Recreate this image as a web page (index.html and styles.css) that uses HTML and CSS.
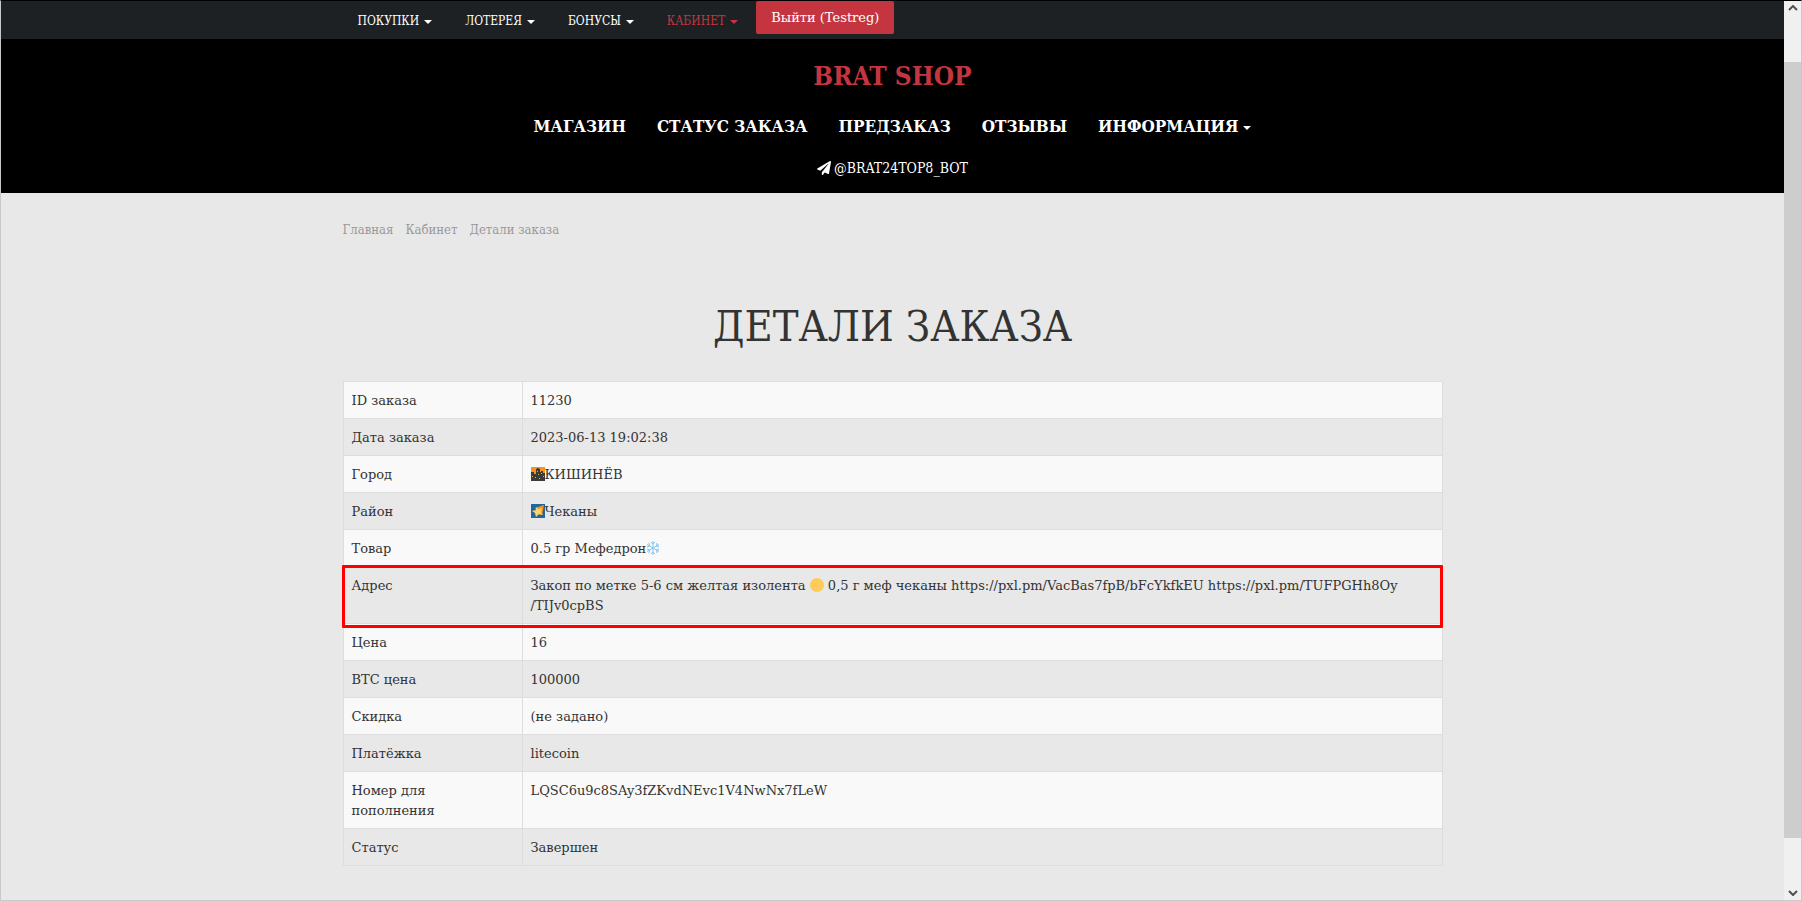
FILE: index.html
```html
<!DOCTYPE html>
<html lang="ru">
<head>
<meta charset="utf-8">
<title>Детали заказа</title>
<link rel="stylesheet" href="styles.css">
</head>
<body>
<div class="page">
  <nav class="topbar">
    <div class="container topbar-row">
      <a class="top-link" href="#">ПОКУПКИ<span class="caret"></span></a>
      <a class="top-link" href="#">ЛОТЕРЕЯ<span class="caret"></span></a>
      <a class="top-link" href="#">БОНУСЫ<span class="caret"></span></a>
      <a class="top-link active" href="#">КАБИНЕТ<span class="caret"></span></a>
      <button class="logout" type="button">Выйти (Testreg)</button>
    </div>
  </nav>
  <header class="header">
    <a class="brand" href="#">BRAT SHOP</a>
    <nav class="main-nav">
      <a href="#">МАГАЗИН</a>
      <a href="#">СТАТУС ЗАКАЗА</a>
      <a href="#">ПРЕДЗАКАЗ</a>
      <a href="#">ОТЗЫВЫ</a>
      <a href="#">ИНФОРМАЦИЯ<span class="caret"></span></a>
    </nav>
    <a class="contact" href="#"><svg class="plane" viewBox="0 0 512 512" aria-hidden="true"><path fill="currentColor" d="M476 3 12 271c-18 10-16 36 2 43l107 45L409 105c5-5 13 2 8 8L176 407v80c0 24 28 33 42 16l64-78 125 53c14 6 31-3 33-19L512 28c3-20-19-34-36-25z"/></svg>@BRAT24TOP8_BOT</a>
  </header>
  <main class="container">
    <nav class="breadcrumbs">
      <a href="#">Главная</a>
      <a href="#">Кабинет</a>
      <span>Детали заказа</span>
    </nav>
    <h1 class="title">ДЕТАЛИ ЗАКАЗА</h1>
    <table class="details">
      <tbody>
      <tr><th scope="row">ID заказа</th><td>11230</td></tr>
      <tr><th scope="row">Дата заказа</th><td>2023-06-13 19:02:38</td></tr>
      <tr><th scope="row">Город</th><td><svg class="emoji" viewBox="0 0 14 14" aria-hidden="true"><path fill="#f7941d" d="M0 0h14v14H0z"/><path fill="#3b3b3b" d="M0 5h3v2h2V2l2-1 2 1v3h1V4h2v2h2v8H0z"/><path fill="#e9b53a" d="M1 9h1v1H1zM4 10h1v1H4zM6 4h1v1H6zM7 7h1v1H7zM10 6h1v1h-1zM12 9h1v1h-1zM8 11h1v1H8z"/></svg>КИШИНЁВ</td></tr>
      <tr><th scope="row">Район</th><td><svg class="emoji" viewBox="0 0 14 14" aria-hidden="true"><path fill="#2367a0" d="M0 0h14v14H0z"/><path fill="#f79420" d="m4 4 9-3-2 10-4-1z"/><path fill="#ffd166" d="m5 3 2 2 4-1-1 4 2 3-4-1-3 3-1-4-3-2 4-1z"/></svg>Чеканы</td></tr>
      <tr><th scope="row">Товар</th><td>0.5 гр Мефедрон<svg class="emoji" viewBox="0 0 14 14" aria-hidden="true"><path fill="none" stroke="#84c5f4" d="M7 0v14M1 3.500l12 7M13 3.500l-12 7M5 1l2 2 2-2M5 13l2-2 2 2M1 6l2.500-1L3 2M13 8l-2.500 1 .5 3M13 6l-2.500-1L11 2M1 8l2.500 1L3 12"/></svg></td></tr>
      <tr class="marked"><th scope="row">Адрес</th><td>Закоп по метке 5-6 см желтая изолента <svg class="emoji" viewBox="0 0 14 14" aria-hidden="true"><circle cx="7" cy="7" r="7" fill="#fdcb58"/></svg> 0,5 г меф чеканы https://pxl.pm/VacBas7fpB/bFcYkfkEU https://pxl.pm/TUFPGHh8Oy<wbr>/TIJv0cpBS</td></tr>
      <tr><th scope="row">Цена</th><td>16</td></tr>
      <tr><th scope="row">BTC цена</th><td>100000</td></tr>
      <tr><th scope="row">Скидка</th><td>(не задано)</td></tr>
      <tr><th scope="row">Платёжка</th><td>litecoin</td></tr>
      <tr><th scope="row">Номер для<br>пополнения</th><td>LQSC6u9c8SAy3fZKvdNEvc1V4NwNx7fLeW</td></tr>
      <tr><th scope="row">Статус</th><td>Завершен</td></tr>
      </tbody>
    </table>
  </main>
</div>
<div class="scrollbar" aria-hidden="true">
  <svg class="arrow" viewBox="0 0 10 6"><path d="m1 5 4-4 4 4"/></svg>
  <div class="track"><div class="thumb"></div></div>
  <svg class="arrow" viewBox="0 0 10 6"><path d="m1 1 4 4 4-4"/></svg>
</div>
</body>
</html>
```
FILE: styles.css
```css
* { box-sizing: border-box; }

body {
  margin: 0;
  min-height: 100vh;
  display: flex;
  background: #e8e8e8;
  border: 1px solid #c8c8c8;
  border-top-color: #000;
  color: #333;
  font: 13px/20px "Roboto Slab", "DejaVu Serif", serif;
}

a { color: inherit; text-decoration: none; }

.page { flex: 1; min-width: 0; }

.container {
  max-width: 1132px;
  margin: 0 auto;
  padding: 0 16px;
}

.top-link,
.header,
.breadcrumbs,
.title {
  font-family: "Roboto Slab", "DejaVu Serif Condensed", "DejaVu Serif", serif;
}

.topbar { background: #1d2124; color: #fff; }

.topbar-row {
  display: flex;
  align-items: flex-start;
  height: 38px;
}

.top-link {
  padding: 10px 18px 8px 15px;
  font-size: 12px;
}

.top-link.active { color: #c5353f; }

.caret {
  display: inline-block;
  margin-left: 5px;
  vertical-align: middle;
  border: 4px solid transparent;
  border-top-color: currentColor;
  border-bottom: 0;
}

.logout {
  height: 33px;
  padding: 0 15px;
  border: 0;
  border-radius: 2px;
  background: #c5353f;
  color: #fff;
  font: inherit;
}

.header {
  display: flex;
  flex-direction: column;
  align-items: center;
  height: 154px;
  padding-top: 20px;
  background: #000;
  color: #fff;
}

.brand {
  color: #c5353f;
  font-size: 26px;
  font-weight: bold;
  line-height: 34px;
}

.main-nav {
  display: flex;
  gap: 31px;
  margin-top: 20px;
  font-size: 17px;
  font-weight: bold;
  line-height: 26px;
}

.contact {
  display: flex;
  align-items: center;
  gap: 3px;
  margin-top: 19px;
  font-size: 14px;
}

.plane { width: 14px; height: 14px; }

.breadcrumbs {
  display: flex;
  gap: 12px;
  padding-top: 27px;
  color: #999;
  font-size: 13px;
}

.title {
  margin: 59px 0 28px;
  font-size: 43px;
  font-weight: normal;
  line-height: 54px;
  text-align: center;
}

.details {
  width: 100%;
  border-collapse: collapse;
}

.details tr:nth-child(odd) { background: #f9f9f9; }

.details th,
.details td {
  padding: 9px 8px 7px;
  border: 1px solid #ddd;
  font-weight: normal;
  text-align: left;
  vertical-align: top;
}

.details th { width: 179px; }

.marked { position: relative; }

.marked td::after {
  content: "";
  position: absolute;
  inset: -2px -1px -4px;
  border: 3px solid #f00;
  border-radius: 1px;
}

.emoji {
  width: 14px;
  height: 14px;
  vertical-align: -2px;
}

.scrollbar {
  display: flex;
  flex-direction: column;
  align-items: center;
  width: 17px;
  background: #f0f0f0;
}

.arrow {
  width: 10px;
  height: 6px;
  margin: 4px 0;
  fill: none;
  stroke: #505050;
  stroke-width: 2;
}

.track { flex: 1; align-self: stretch; padding: 47px 0 48px; }

.thumb { height: 100%; background: #cdcdcd; }
```
